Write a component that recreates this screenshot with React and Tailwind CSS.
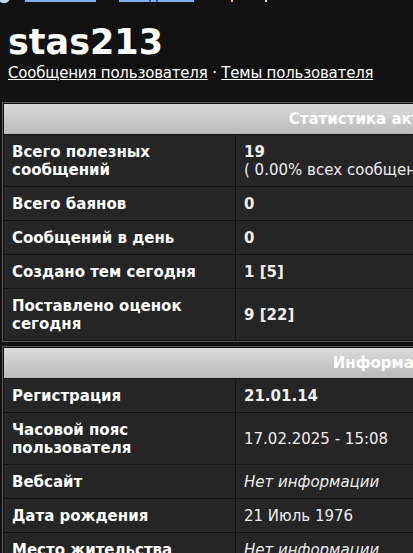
import React from "react";

const font = { fontFamily: '"DejaVu Sans", Verdana, sans-serif' };

function Row({ label, children }) {
  return (
    <div className="grid grid-cols-[231px_1fr] gap-px">
      <div className="bg-[#252525] px-2 pt-[8px] pb-[7px] text-[15px] leading-[18px] font-bold text-white flex items-center">
        <span>{label}</span>
      </div>
      <div className="bg-[#252525] px-2 pt-[8px] pb-[7px] text-[15px] leading-[18px] text-[#eeeeee] flex items-center">
        <div>{children}</div>
      </div>
    </div>
  );
}

function Table({ title, children }) {
  return (
    <div className="border border-[#5c5c5c] p-px bg-[#111]">
      <div className="flex flex-col gap-px">
        <div className="h-[30px] bg-gradient-to-b from-[#dcdcdc] to-[#b9b9b9] flex items-center justify-center text-[15px] font-bold text-white">
          {title}
        </div>
        {children}
      </div>
    </div>
  );
}

export default function App() {
  return (
    <div className="w-[413px] h-[553px] overflow-hidden bg-[#111111] text-white" style={font}>
      <div className="relative h-[4px]">
        <div className="absolute left-[-2px] top-[-8px] w-[12px] h-[11px] rounded-full bg-[#c9d4e4]" />
        <div className="absolute left-[25px] top-0 w-[71px] h-[2px] bg-[#7fb0ee]" />
        <div className="absolute left-[119px] top-0 w-[75px] h-[2px] bg-[#7fb0ee]" />
        <div className="absolute left-[149px] top-0 w-[2px] h-[2px] bg-[#3a4fb0]" />
        <div className="absolute left-[156px] top-0 w-[2px] h-[2px] bg-[#3a4fb0]" />
        <div className="absolute left-[231px] top-0 w-[2px] h-[2px] bg-[#e8c070]" />
        <div className="absolute left-[265px] top-0 w-[2px] h-[2px] bg-[#dddddd]" />
      </div>
      <div className="px-2 pt-[18px]">
        <h1 className="text-[35px] leading-[41px] font-bold text-white">stas213</h1>
        <div className="text-[15px] leading-[20px] text-white whitespace-nowrap tracking-[-0.2px]">
          <a className="underline">Сообщения пользователя</a>
          <span> · </span>
          <a className="underline">Темы пользователя</a>
        </div>
      </div>
      <div className="w-[776px] pl-[2px] mt-[19px] flex flex-col gap-[4px]">
        <Table title="Статистика активности">
          <Row label={<>Всего полезных<br />сообщений</>}>
            <b>19</b>
            <br />( 0.00% всех сообщений / 0.00 сообщений в день )
          </Row>
          <Row label="Всего баянов"><b>0</b></Row>
          <Row label="Сообщений в день"><b>0</b></Row>
          <Row label="Создано тем сегодня"><b>1 [5]</b></Row>
          <Row label={<>Поставлено оценок<br />сегодня</>}><b>9 [22]</b></Row>
        </Table>
        <Table title="Информация">
          <Row label="Регистрация"><b>21.01.14</b></Row>
          <Row label={<>Часовой пояс<br />пользователя</>}>17.02.2025 - 15:08</Row>
          <Row label="Вебсайт"><i>Нет информации</i></Row>
          <Row label="Дата рождения">21 Июль 1976</Row>
          <Row label="Место жительства"><i>Нет информации</i></Row>
        </Table>
      </div>
    </div>
  );
}
